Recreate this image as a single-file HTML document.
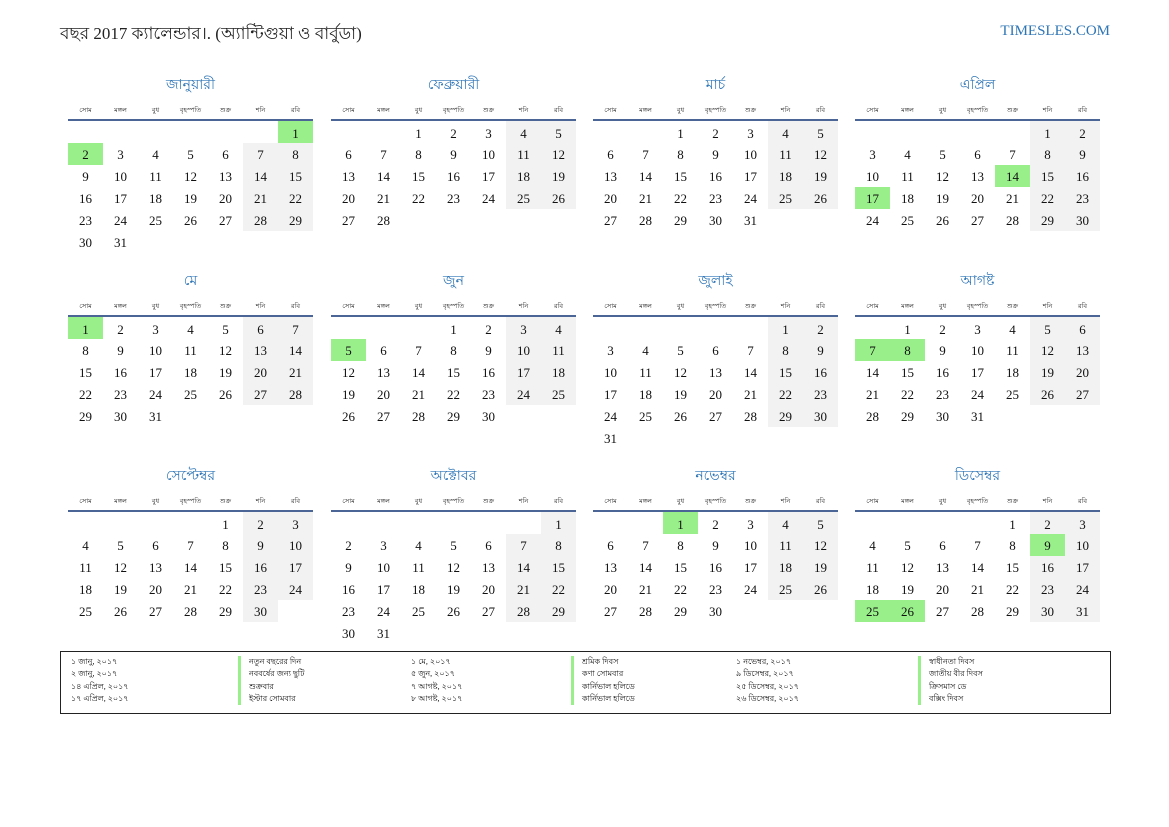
<!DOCTYPE html>
<html><head><meta charset="utf-8"><style>
*{margin:0;padding:0;box-sizing:border-box}
body{width:1169px;height:827px;background:#fff;position:relative;font-family:"Liberation Serif","Noto Sans CJK SC",serif;color:#111;overflow:hidden}
.ttl{position:absolute;left:60px;top:21px;font-size:17px;color:#222;white-space:nowrap}
.site{position:absolute;right:59px;top:23px;font-size:15px;color:#2e75b6}
.m{position:absolute;width:245px}
.m .t{height:20px;line-height:20px;text-align:center;font-size:14px;color:#2e75b6}
.m table{border-collapse:collapse;width:245px;table-layout:fixed;margin-top:5px}
.m th{height:19px;font-size:6.5px;font-weight:normal;color:#222;border-bottom:2px solid #4a6596;vertical-align:middle}
.m td{height:22px;text-align:center;font-size:13px;vertical-align:middle;padding-top:1px}
.m tr.f td{height:23px;padding-top:3px}
td.w{background:#f2f2f2}
td.h{background:#99f08a}
.leg{position:absolute;left:60px;top:651px;width:1051px;height:63px;border:1px solid #222;font-size:8px}
.leg div{position:absolute;line-height:12.3px;white-space:nowrap}
.leg .n{border-left:3px solid #99f08a;padding-left:8px}
</style></head><body>
<div class="ttl">বছর 2017 ক্যালেন্ডার।. (অ্যান্টিগুয়া ও বার্বুডা)</div>
<div class="site">TIMESLES.COM</div>

<div class="m" style="left:68px;top:76px"><div class="t">জানুয়ারী</div><table><tr><th>সোম</th><th>মঙ্গল</th><th>বুধ</th><th>বৃহস্পতি</th><th>শুক্র</th><th>শনি</th><th>রবি</th></tr>
<tr class="f"><td></td><td></td><td></td><td></td><td></td><td></td><td class="h">1</td></tr>
<tr><td class="h">2</td><td>3</td><td>4</td><td>5</td><td>6</td><td class="w">7</td><td class="w">8</td></tr>
<tr><td>9</td><td>10</td><td>11</td><td>12</td><td>13</td><td class="w">14</td><td class="w">15</td></tr>
<tr><td>16</td><td>17</td><td>18</td><td>19</td><td>20</td><td class="w">21</td><td class="w">22</td></tr>
<tr><td>23</td><td>24</td><td>25</td><td>26</td><td>27</td><td class="w">28</td><td class="w">29</td></tr>
<tr><td>30</td><td>31</td><td></td><td></td><td></td><td></td><td></td></tr></table></div>

<div class="m" style="left:331px;top:76px"><div class="t">ফেব্রুয়ারী</div><table><tr><th>সোম</th><th>মঙ্গল</th><th>বুধ</th><th>বৃহস্পতি</th><th>শুক্র</th><th>শনি</th><th>রবি</th></tr>
<tr class="f"><td></td><td></td><td>1</td><td>2</td><td>3</td><td class="w">4</td><td class="w">5</td></tr>
<tr><td>6</td><td>7</td><td>8</td><td>9</td><td>10</td><td class="w">11</td><td class="w">12</td></tr>
<tr><td>13</td><td>14</td><td>15</td><td>16</td><td>17</td><td class="w">18</td><td class="w">19</td></tr>
<tr><td>20</td><td>21</td><td>22</td><td>23</td><td>24</td><td class="w">25</td><td class="w">26</td></tr>
<tr><td>27</td><td>28</td><td></td><td></td><td></td><td></td><td></td></tr></table></div>

<div class="m" style="left:593px;top:76px"><div class="t">মার্চ</div><table><tr><th>সোম</th><th>মঙ্গল</th><th>বুধ</th><th>বৃহস্পতি</th><th>শুক্র</th><th>শনি</th><th>রবি</th></tr>
<tr class="f"><td></td><td></td><td>1</td><td>2</td><td>3</td><td class="w">4</td><td class="w">5</td></tr>
<tr><td>6</td><td>7</td><td>8</td><td>9</td><td>10</td><td class="w">11</td><td class="w">12</td></tr>
<tr><td>13</td><td>14</td><td>15</td><td>16</td><td>17</td><td class="w">18</td><td class="w">19</td></tr>
<tr><td>20</td><td>21</td><td>22</td><td>23</td><td>24</td><td class="w">25</td><td class="w">26</td></tr>
<tr><td>27</td><td>28</td><td>29</td><td>30</td><td>31</td><td></td><td></td></tr></table></div>

<div class="m" style="left:855px;top:76px"><div class="t">এপ্রিল</div><table><tr><th>সোম</th><th>মঙ্গল</th><th>বুধ</th><th>বৃহস্পতি</th><th>শুক্র</th><th>শনি</th><th>রবি</th></tr>
<tr class="f"><td></td><td></td><td></td><td></td><td></td><td class="w">1</td><td class="w">2</td></tr>
<tr><td>3</td><td>4</td><td>5</td><td>6</td><td>7</td><td class="w">8</td><td class="w">9</td></tr>
<tr><td>10</td><td>11</td><td>12</td><td>13</td><td class="h">14</td><td class="w">15</td><td class="w">16</td></tr>
<tr><td class="h">17</td><td>18</td><td>19</td><td>20</td><td>21</td><td class="w">22</td><td class="w">23</td></tr>
<tr><td>24</td><td>25</td><td>26</td><td>27</td><td>28</td><td class="w">29</td><td class="w">30</td></tr></table></div>

<div class="m" style="left:68px;top:272px"><div class="t">মে</div><table><tr><th>সোম</th><th>মঙ্গল</th><th>বুধ</th><th>বৃহস্পতি</th><th>শুক্র</th><th>শনি</th><th>রবি</th></tr>
<tr class="f"><td class="h">1</td><td>2</td><td>3</td><td>4</td><td>5</td><td class="w">6</td><td class="w">7</td></tr>
<tr><td>8</td><td>9</td><td>10</td><td>11</td><td>12</td><td class="w">13</td><td class="w">14</td></tr>
<tr><td>15</td><td>16</td><td>17</td><td>18</td><td>19</td><td class="w">20</td><td class="w">21</td></tr>
<tr><td>22</td><td>23</td><td>24</td><td>25</td><td>26</td><td class="w">27</td><td class="w">28</td></tr>
<tr><td>29</td><td>30</td><td>31</td><td></td><td></td><td></td><td></td></tr></table></div>

<div class="m" style="left:331px;top:272px"><div class="t">জুন</div><table><tr><th>সোম</th><th>মঙ্গল</th><th>বুধ</th><th>বৃহস্পতি</th><th>শুক্র</th><th>শনি</th><th>রবি</th></tr>
<tr class="f"><td></td><td></td><td></td><td>1</td><td>2</td><td class="w">3</td><td class="w">4</td></tr>
<tr><td class="h">5</td><td>6</td><td>7</td><td>8</td><td>9</td><td class="w">10</td><td class="w">11</td></tr>
<tr><td>12</td><td>13</td><td>14</td><td>15</td><td>16</td><td class="w">17</td><td class="w">18</td></tr>
<tr><td>19</td><td>20</td><td>21</td><td>22</td><td>23</td><td class="w">24</td><td class="w">25</td></tr>
<tr><td>26</td><td>27</td><td>28</td><td>29</td><td>30</td><td></td><td></td></tr></table></div>

<div class="m" style="left:593px;top:272px"><div class="t">জুলাই</div><table><tr><th>সোম</th><th>মঙ্গল</th><th>বুধ</th><th>বৃহস্পতি</th><th>শুক্র</th><th>শনি</th><th>রবি</th></tr>
<tr class="f"><td></td><td></td><td></td><td></td><td></td><td class="w">1</td><td class="w">2</td></tr>
<tr><td>3</td><td>4</td><td>5</td><td>6</td><td>7</td><td class="w">8</td><td class="w">9</td></tr>
<tr><td>10</td><td>11</td><td>12</td><td>13</td><td>14</td><td class="w">15</td><td class="w">16</td></tr>
<tr><td>17</td><td>18</td><td>19</td><td>20</td><td>21</td><td class="w">22</td><td class="w">23</td></tr>
<tr><td>24</td><td>25</td><td>26</td><td>27</td><td>28</td><td class="w">29</td><td class="w">30</td></tr>
<tr><td>31</td><td></td><td></td><td></td><td></td><td></td><td></td></tr></table></div>

<div class="m" style="left:855px;top:272px"><div class="t">আগষ্ট</div><table><tr><th>সোম</th><th>মঙ্গল</th><th>বুধ</th><th>বৃহস্পতি</th><th>শুক্র</th><th>শনি</th><th>রবি</th></tr>
<tr class="f"><td></td><td>1</td><td>2</td><td>3</td><td>4</td><td class="w">5</td><td class="w">6</td></tr>
<tr><td class="h">7</td><td class="h">8</td><td>9</td><td>10</td><td>11</td><td class="w">12</td><td class="w">13</td></tr>
<tr><td>14</td><td>15</td><td>16</td><td>17</td><td>18</td><td class="w">19</td><td class="w">20</td></tr>
<tr><td>21</td><td>22</td><td>23</td><td>24</td><td>25</td><td class="w">26</td><td class="w">27</td></tr>
<tr><td>28</td><td>29</td><td>30</td><td>31</td><td></td><td></td><td></td></tr></table></div>

<div class="m" style="left:68px;top:467px"><div class="t">সেপ্টেম্বর</div><table><tr><th>সোম</th><th>মঙ্গল</th><th>বুধ</th><th>বৃহস্পতি</th><th>শুক্র</th><th>শনি</th><th>রবি</th></tr>
<tr class="f"><td></td><td></td><td></td><td></td><td>1</td><td class="w">2</td><td class="w">3</td></tr>
<tr><td>4</td><td>5</td><td>6</td><td>7</td><td>8</td><td class="w">9</td><td class="w">10</td></tr>
<tr><td>11</td><td>12</td><td>13</td><td>14</td><td>15</td><td class="w">16</td><td class="w">17</td></tr>
<tr><td>18</td><td>19</td><td>20</td><td>21</td><td>22</td><td class="w">23</td><td class="w">24</td></tr>
<tr><td>25</td><td>26</td><td>27</td><td>28</td><td>29</td><td class="w">30</td><td></td></tr></table></div>

<div class="m" style="left:331px;top:467px"><div class="t">অক্টোবর</div><table><tr><th>সোম</th><th>মঙ্গল</th><th>বুধ</th><th>বৃহস্পতি</th><th>শুক্র</th><th>শনি</th><th>রবি</th></tr>
<tr class="f"><td></td><td></td><td></td><td></td><td></td><td></td><td class="w">1</td></tr>
<tr><td>2</td><td>3</td><td>4</td><td>5</td><td>6</td><td class="w">7</td><td class="w">8</td></tr>
<tr><td>9</td><td>10</td><td>11</td><td>12</td><td>13</td><td class="w">14</td><td class="w">15</td></tr>
<tr><td>16</td><td>17</td><td>18</td><td>19</td><td>20</td><td class="w">21</td><td class="w">22</td></tr>
<tr><td>23</td><td>24</td><td>25</td><td>26</td><td>27</td><td class="w">28</td><td class="w">29</td></tr>
<tr><td>30</td><td>31</td><td></td><td></td><td></td><td></td><td></td></tr></table></div>

<div class="m" style="left:593px;top:467px"><div class="t">নভেম্বর</div><table><tr><th>সোম</th><th>মঙ্গল</th><th>বুধ</th><th>বৃহস্পতি</th><th>শুক্র</th><th>শনি</th><th>রবি</th></tr>
<tr class="f"><td></td><td></td><td class="h">1</td><td>2</td><td>3</td><td class="w">4</td><td class="w">5</td></tr>
<tr><td>6</td><td>7</td><td>8</td><td>9</td><td>10</td><td class="w">11</td><td class="w">12</td></tr>
<tr><td>13</td><td>14</td><td>15</td><td>16</td><td>17</td><td class="w">18</td><td class="w">19</td></tr>
<tr><td>20</td><td>21</td><td>22</td><td>23</td><td>24</td><td class="w">25</td><td class="w">26</td></tr>
<tr><td>27</td><td>28</td><td>29</td><td>30</td><td></td><td></td><td></td></tr></table></div>

<div class="m" style="left:855px;top:467px"><div class="t">ডিসেম্বর</div><table><tr><th>সোম</th><th>মঙ্গল</th><th>বুধ</th><th>বৃহস্পতি</th><th>শুক্র</th><th>শনি</th><th>রবি</th></tr>
<tr class="f"><td></td><td></td><td></td><td></td><td>1</td><td class="w">2</td><td class="w">3</td></tr>
<tr><td>4</td><td>5</td><td>6</td><td>7</td><td>8</td><td class="h">9</td><td class="w">10</td></tr>
<tr><td>11</td><td>12</td><td>13</td><td>14</td><td>15</td><td class="w">16</td><td class="w">17</td></tr>
<tr><td>18</td><td>19</td><td>20</td><td>21</td><td>22</td><td class="w">23</td><td class="w">24</td></tr>
<tr><td class="h">25</td><td class="h">26</td><td>27</td><td>28</td><td>29</td><td class="w">30</td><td class="w">31</td></tr></table></div>

<div class="leg">
<div style="left:10px;top:4px">১ জানু, ২০১৭<br>২ জানু, ২০১৭<br>১৪ এপ্রিল, ২০১৭<br>১৭ এপ্রিল, ২০১৭</div>
<div class="n" style="left:177px;top:4px">নতুন বছরের দিন<br>নববর্ষের জন্য ছুটি<br>শুক্রবার<br>ইস্টার সোমবার</div>
<div style="left:350px;top:4px">১ মে, ২০১৭<br>৫ জুন, ২০১৭<br>৭ আগষ্ট, ২০১৭<br>৮ আগষ্ট, ২০১৭</div>
<div class="n" style="left:510px;top:4px">শ্রমিক দিবস<br>কণা সোমবার<br>কার্নিভাল হলিডে<br>কার্নিভাল হলিডে</div>
<div style="left:675px;top:4px">১ নভেম্বর, ২০১৭<br>৯ ডিসেম্বর, ২০১৭<br>২৫ ডিসেম্বর, ২০১৭<br>২৬ ডিসেম্বর, ২০১৭</div>
<div class="n" style="left:857px;top:4px">স্বাধীনতা দিবস<br>জাতীয় বীর দিবস<br>ক্রিসমাস ডে<br>বক্সিং দিবস</div>
</div>
</body></html>
